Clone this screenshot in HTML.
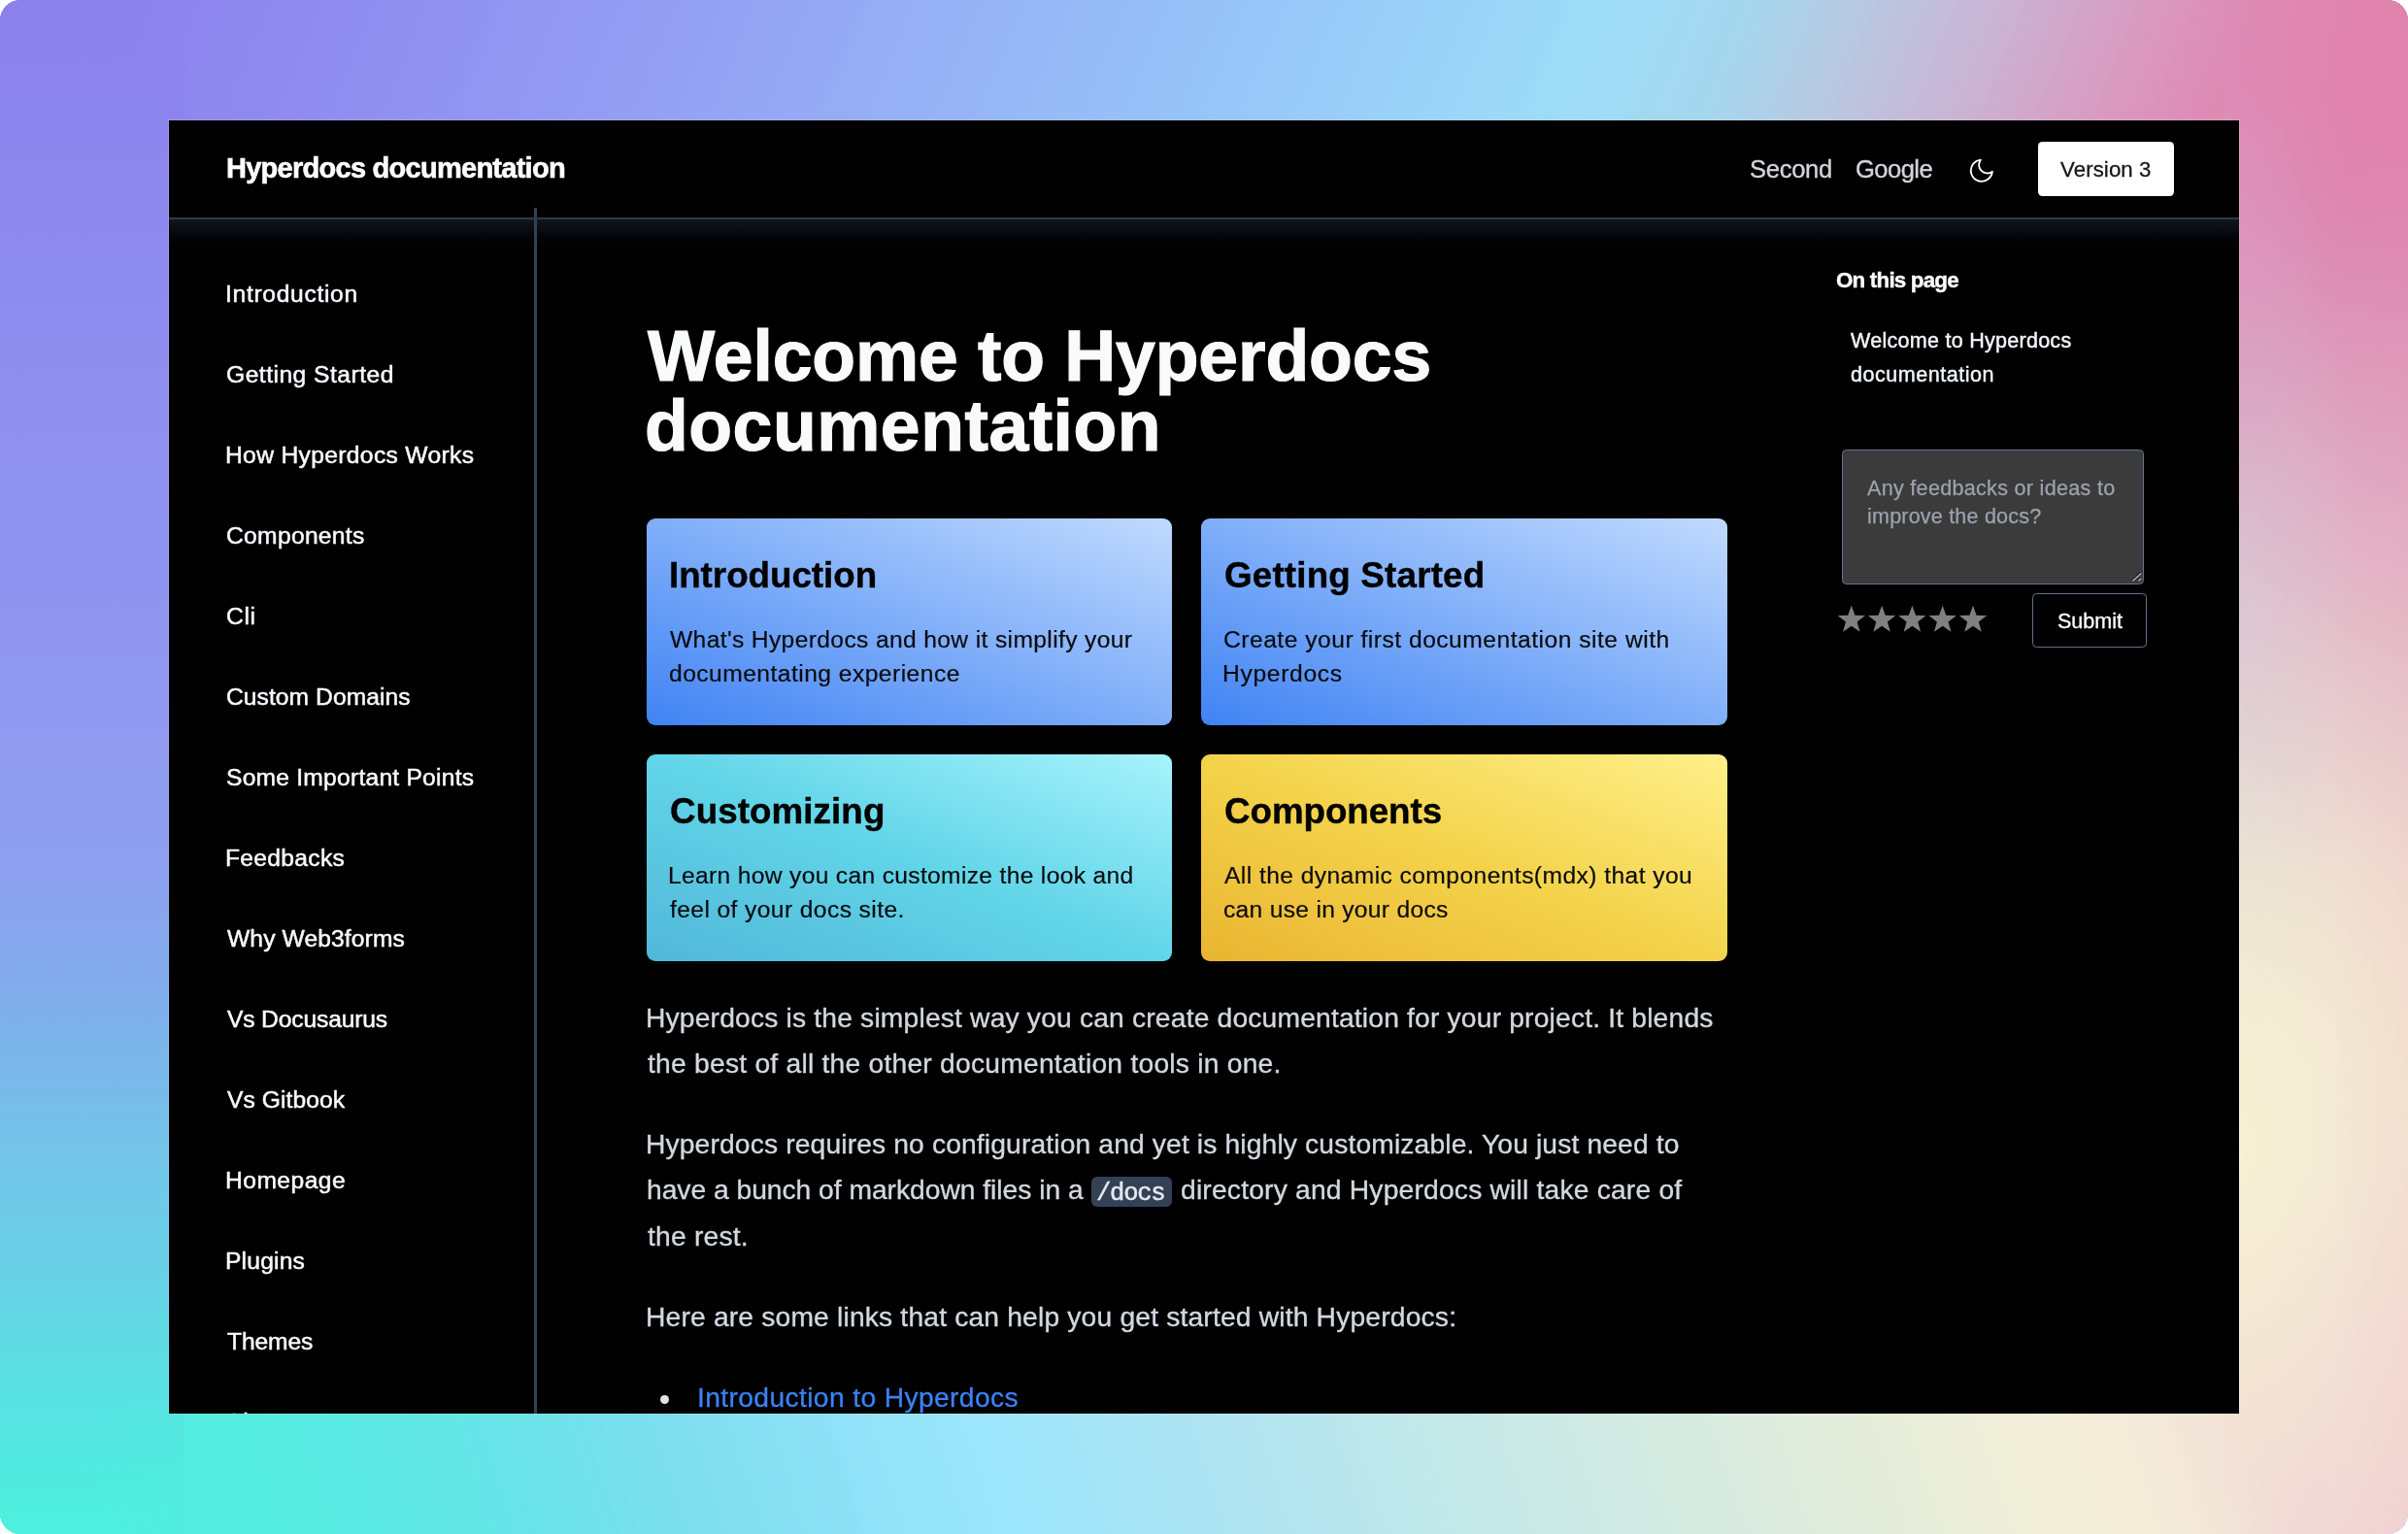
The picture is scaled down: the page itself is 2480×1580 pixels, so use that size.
<!DOCTYPE html>
<html lang="en">
<head>
<meta charset="utf-8">
<title>Hyperdocs documentation</title>
<style>
html,body{margin:0;padding:0;background:#fff;}
body{width:2480px;height:1580px;position:relative;overflow:hidden;font-family:"Liberation Sans",sans-serif;}
#bg{position:absolute;left:0;top:0;width:2480px;height:1580px;border-radius:21px;overflow:hidden;background:#9cc6f4;}
#bg div{position:absolute;}
#bgT{left:0;top:0;width:2480px;height:800px;background:linear-gradient(112deg,#8b7fec 0.89%,#8f8aef 11.60%,#939bf2 23.01%,#96aff5 34.07%,#96c3f8 45.13%,#9bd4f8 54.40%,#9ddcf7 58.68%,#a5d7ee 64.39%,#b9c8e1 68.67%,#cbb2d2 74.02%,#da98be 79.37%,#e084af 84.73%,#e07daa 89.36%);}
#bgB{left:0;top:780px;width:2480px;height:800px;background:linear-gradient(72deg,#4eeede 0.74%,#55ebe1 11.68%,#64e4e6 18.98%,#7ddeee 26.28%,#91e2f8 33.58%,#9be6fc 37.96%,#ade4f3 45.99%,#c3e8e8 55.48%,#d7ebe1 64.61%,#e6edda 71.90%,#f4eed8 79.20%,#f3e4d9 84.68%,#f0d8d6 91.25%);}
#bgL{left:0;top:0;width:190px;height:1580px;background:linear-gradient(180deg,#8b80ec 0.00%,#8c87ed 12.66%,#8f8fef 25.32%,#9094f0 37.97%,#9097f0 44.30%,#8e9fef 55.70%,#82aaec 63.29%,#7ab8ea 69.62%,#72c6e8 75.95%,#68cfe6 82.28%,#5cdee3 88.61%,#52e9e0 94.94%,#4cf0de 100.00%);-webkit-mask-image:linear-gradient(180deg,transparent 20px,#000 150px,#000 1440px,transparent 1560px),linear-gradient(90deg,#000 100px,transparent 190px);mask-image:linear-gradient(180deg,transparent 20px,#000 150px,#000 1440px,transparent 1560px),linear-gradient(90deg,#000 100px,transparent 190px);}
#bgR{left:2290px;top:0;width:190px;height:1580px;background:radial-gradient(ellipse 130px 430px at 0px 110px,rgba(221,152,192,.55),rgba(221,152,192,0)),radial-gradient(ellipse 120px 520px at 15px 600px,rgba(195,228,235,.26),rgba(195,228,235,0)),radial-gradient(ellipse 130px 420px at 15px 1190px,rgba(250,252,205,.4),rgba(250,252,205,0)),linear-gradient(90deg,rgba(236,130,165,0) 60%,rgba(236,130,165,.08) 100%),linear-gradient(184deg,#df84ae 0.38%,#df82ad 6.66%,#de86b0 12.93%,#dd90b6 19.21%,#de9ebc 25.49%,#e0abc2 31.76%,#e3b8c7 38.04%,#e6c6cc 44.32%,#ead3cf 50.59%,#efdfd2 56.87%,#f2e5d3 63.15%,#f3e8d5 69.42%,#f3e8d6 75.70%,#f3e4d6 81.97%,#f2e0d6 88.25%,#f1dcd5 94.53%,#f0d8d5 99.55%);-webkit-mask-image:linear-gradient(180deg,transparent 20px,#000 150px,#000 1440px,transparent 1560px),linear-gradient(270deg,#000 100px,transparent 190px);mask-image:linear-gradient(180deg,transparent 20px,#000 150px,#000 1440px,transparent 1560px),linear-gradient(270deg,#000 100px,transparent 190px);}
#win{position:absolute;left:174px;top:124px;width:2132px;height:1332px;background:#000;overflow:hidden;box-shadow:0 0 0 1px rgba(255,255,255,.15);}
#win>*{position:absolute;}
.t{position:absolute;white-space:nowrap;line-height:1;margin:0;padding:0;will-change:transform;text-decoration:none;font-weight:400;font-style:normal;}
.g{display:contents;}
a{text-decoration:none;color:inherit;}
#hshadow{left:0;top:102px;width:2132px;height:27px;background:linear-gradient(180deg,#11151e 0%,#0b0e14 30%,#04050a 65%,#000 100%);}
#hline{left:0;top:100px;width:2132px;height:2px;background:#2e3a4d;}
#vline{left:376px;top:90px;width:3px;height:1250px;background:#334155;}
.card{border-radius:9px;width:541px;height:213px;}
#verbtn{left:1925px;top:22px;width:140px;height:56.1px;border-radius:4.5px;background:#fff;}
#ta{left:1723.25px;top:338.9px;width:310.95px;height:139px;border-radius:4.5px;background:#3b3b3b;border:1.5px solid #64748b;box-sizing:border-box;}
#submit{left:1918.9px;top:486.9px;width:118.3px;height:56.3px;border-radius:4.5px;border:1.5px solid #64748b;box-sizing:border-box;background:#000;}
#code{left:950.25px;top:1088px;width:82.75px;height:30.8px;border-radius:6px;background:#334155;}
#bullet{left:505.8px;top:1312.5px;width:9px;height:9px;border-radius:50%;background:#e0e4ea;}
</style>
</head>
<body>
<div id="bg"><div id="bgT"></div><div id="bgB"></div><div id="bgL"></div><div id="bgR"></div></div>
<div id="win">
  <div id="hshadow"></div>
  <div id="vline"></div>
  <div id="hline"></div>
  <div id="verbtn"></div>
  <svg id="moon" style="left:1852.3px;top:37px" width="29.6" height="29.6" viewBox="0 0 24 24" fill="none" stroke="#fff" stroke-width="1.5" stroke-linecap="round" stroke-linejoin="round"><path d="M21 12.79A9 9 0 1 1 11.21 3 7 7 0 0 0 21 12.79z"/></svg>
  <div class="card" style="left:492px;top:410px;background:linear-gradient(to top right,#4083f4,#c0dafe);"></div>
  <div class="card" style="left:1063px;top:410px;width:542px;background:linear-gradient(to top right,#4083f4,#c0dafe);"></div>
  <div class="card" style="left:492px;top:653px;background:linear-gradient(to top right,#52b7d9,#61d5e8 50%,#a7f3fc);"></div>
  <div class="card" style="left:1063px;top:653px;width:542px;background:linear-gradient(to top right,#eab531,#f4d34b 50%,#fef08a);"></div>
  <div id="code"></div>
  <div id="bullet"></div>
  <div id="ta"></div>
  <div id="submit"></div>
  <svg id="grip" style="left:2019px;top:463px" width="14" height="14" viewBox="0 0 14 14" fill="none" stroke-linecap="butt"><path d="M2.5 10.6 L11.4 2.8 M8.6 10.6 L11.4 8.2" stroke="#141414" stroke-width="1.1"/><path d="M3.3 11.4 L12.2 3.6 M9.4 11.4 L12.2 9" stroke="#cfcfcf" stroke-width="1.2"/></svg>
  <svg id="stars" style="left:1699.5px;top:480px" width="200" height="70" viewBox="0 0 200 70" fill="#808080"><polygon points="32.80,19.80 36.39,29.76 46.97,30.10 38.60,36.59 41.56,46.75 32.80,40.80 24.04,46.75 27.00,36.59 18.63,30.10 29.21,29.76"/><polygon points="64.10,19.80 67.69,29.76 78.27,30.10 69.90,36.59 72.86,46.75 64.10,40.80 55.34,46.75 58.30,36.59 49.93,30.10 60.51,29.76"/><polygon points="95.40,19.80 98.99,29.76 109.57,30.10 101.20,36.59 104.16,46.75 95.40,40.80 86.64,46.75 89.60,36.59 81.23,30.10 91.81,29.76"/><polygon points="126.70,19.80 130.29,29.76 140.87,30.10 132.50,36.59 135.46,46.75 126.70,40.80 117.94,46.75 120.90,36.59 112.53,30.10 123.11,29.76"/><polygon points="158.00,19.80 161.59,29.76 172.17,30.10 163.80,36.59 166.76,46.75 158.00,40.80 149.24,46.75 152.20,36.59 143.83,30.10 154.41,29.76"/></svg>
<header class="g">
<a class="t" href="#" style="left:59.00px;top:34.60px;font-size:29.05px;letter-spacing:-0.761px;color:#fff;font-weight:700;-webkit-text-stroke:0.6px #fff;">Hyperdocs documentation</a>
<nav class="g"><a class="t" href="#" style="left:1628.00px;top:38.00px;font-size:25.58px;letter-spacing:-0.305px;color:#d1d5db;-webkit-text-stroke:0.35px #d1d5db;">Second</a><a class="t" href="#" style="left:1736.60px;top:38.00px;font-size:25.58px;letter-spacing:-0.571px;color:#d1d5db;-webkit-text-stroke:0.35px #d1d5db;">Google</a></nav>
<span class="t" style="left:1948.20px;top:39.60px;font-size:22.18px;letter-spacing:0.118px;color:#171717;-webkit-text-stroke:0.3px #171717;">Version 3</span>
</header>
<nav class="g" aria-label="Docs"><ul class="g">
<li class="g"><a class="t" href="#" style="left:58.30px;top:167.40px;font-size:24.64px;letter-spacing:0.683px;color:#f8fafc;-webkit-text-stroke:0.5px #f8fafc;">Introduction</a></li>
<li class="g"><a class="t" href="#" style="left:59.30px;top:250.36px;font-size:24.64px;letter-spacing:0.483px;color:#f8fafc;-webkit-text-stroke:0.5px #f8fafc;">Getting Started</a></li>
<li class="g"><a class="t" href="#" style="left:58.30px;top:333.32px;font-size:24.64px;letter-spacing:0.336px;color:#f8fafc;-webkit-text-stroke:0.5px #f8fafc;">How Hyperdocs Works</a></li>
<li class="g"><a class="t" href="#" style="left:59.30px;top:416.28px;font-size:24.64px;letter-spacing:0.299px;color:#f8fafc;-webkit-text-stroke:0.5px #f8fafc;">Components</a></li>
<li class="g"><a class="t" href="#" style="left:59.30px;top:499.24px;font-size:24.64px;letter-spacing:0.623px;color:#f8fafc;-webkit-text-stroke:0.5px #f8fafc;">Cli</a></li>
<li class="g"><a class="t" href="#" style="left:59.30px;top:582.20px;font-size:24.64px;letter-spacing:0.059px;color:#f8fafc;-webkit-text-stroke:0.5px #f8fafc;">Custom Domains</a></li>
<li class="g"><a class="t" href="#" style="left:59.30px;top:665.16px;font-size:24.64px;letter-spacing:0.227px;color:#f8fafc;-webkit-text-stroke:0.5px #f8fafc;">Some Important Points</a></li>
<li class="g"><a class="t" href="#" style="left:58.30px;top:748.12px;font-size:24.64px;letter-spacing:0.307px;color:#f8fafc;-webkit-text-stroke:0.5px #f8fafc;">Feedbacks</a></li>
<li class="g"><a class="t" href="#" style="left:60.30px;top:831.08px;font-size:24.64px;letter-spacing:0.106px;color:#f8fafc;-webkit-text-stroke:0.5px #f8fafc;">Why Web3forms</a></li>
<li class="g"><a class="t" href="#" style="left:60.30px;top:914.04px;font-size:24.64px;letter-spacing:-0.155px;color:#f8fafc;-webkit-text-stroke:0.5px #f8fafc;">Vs Docusaurus</a></li>
<li class="g"><a class="t" href="#" style="left:60.30px;top:997.00px;font-size:24.64px;letter-spacing:0.074px;color:#f8fafc;-webkit-text-stroke:0.5px #f8fafc;">Vs Gitbook</a></li>
<li class="g"><a class="t" href="#" style="left:58.30px;top:1079.96px;font-size:24.64px;letter-spacing:0.461px;color:#f8fafc;-webkit-text-stroke:0.5px #f8fafc;">Homepage</a></li>
<li class="g"><a class="t" href="#" style="left:58.30px;top:1162.92px;font-size:24.64px;letter-spacing:0.191px;color:#f8fafc;-webkit-text-stroke:0.5px #f8fafc;">Plugins</a></li>
<li class="g"><a class="t" href="#" style="left:60.30px;top:1245.88px;font-size:24.64px;letter-spacing:-0.108px;color:#f8fafc;-webkit-text-stroke:0.5px #f8fafc;">Themes</a></li>
<li class="g"><a class="t" href="#" style="left:59.30px;top:1328.84px;font-size:24.64px;letter-spacing:0.740px;color:#f8fafc;-webkit-text-stroke:0.5px #f8fafc;">Showcase</a></li>
</ul></nav>
<main class="g">
<h1 class="g"><span class="t" style="left:493.20px;top:207.00px;font-size:73.30px;letter-spacing:-0.107px;color:#f9fafb;font-weight:700;-webkit-text-stroke:1.2px #f9fafb;">Welcome to Hyperdocs</span> <span class="t" style="left:490.20px;top:278.60px;font-size:73.30px;letter-spacing:0.524px;color:#f9fafb;font-weight:700;-webkit-text-stroke:1.2px #f9fafb;">documentation</span></h1>
<a class="g" href="#"><h2 class="g"><span class="t" style="left:515.30px;top:450.90px;font-size:36.78px;letter-spacing:-0.024px;color:#000;font-weight:700;-webkit-text-stroke:0.4px #000;">Introduction</span></h2><p class="g"><span class="t" style="left:515.50px;top:522.70px;font-size:24.64px;letter-spacing:0.355px;color:#0b0b0f;-webkit-text-stroke:0.2px #0b0b0f;">What's Hyperdocs and how it simplify your</span> <span class="t" style="left:514.50px;top:558.00px;font-size:24.64px;letter-spacing:0.458px;color:#0b0b0f;-webkit-text-stroke:0.2px #0b0b0f;">documentating experience</span></p></a>
<a class="g" href="#"><h2 class="g"><span class="t" style="left:1087.30px;top:450.90px;font-size:36.78px;letter-spacing:0.187px;color:#000;font-weight:700;-webkit-text-stroke:0.4px #000;">Getting Started</span></h2><p class="g"><span class="t" style="left:1085.50px;top:522.70px;font-size:24.64px;letter-spacing:0.496px;color:#0b0b0f;-webkit-text-stroke:0.2px #0b0b0f;">Create your first documentation site with</span> <span class="t" style="left:1084.50px;top:558.00px;font-size:24.64px;letter-spacing:0.676px;color:#0b0b0f;-webkit-text-stroke:0.2px #0b0b0f;">Hyperdocs</span></p></a>
<a class="g" href="#"><h2 class="g"><span class="t" style="left:516.30px;top:693.90px;font-size:36.78px;letter-spacing:0.078px;color:#000;font-weight:700;-webkit-text-stroke:0.4px #000;">Customizing</span></h2><p class="g"><span class="t" style="left:513.50px;top:765.70px;font-size:24.64px;letter-spacing:0.318px;color:#0b0b0f;-webkit-text-stroke:0.2px #0b0b0f;">Learn how you can customize the look and</span> <span class="t" style="left:515.50px;top:801.00px;font-size:24.64px;letter-spacing:0.393px;color:#0b0b0f;-webkit-text-stroke:0.2px #0b0b0f;">feel of your docs site.</span></p></a>
<a class="g" href="#"><h2 class="g"><span class="t" style="left:1087.30px;top:693.90px;font-size:36.78px;letter-spacing:-0.058px;color:#000;font-weight:700;-webkit-text-stroke:0.4px #000;">Components</span></h2><p class="g"><span class="t" style="left:1086.50px;top:765.70px;font-size:24.64px;letter-spacing:0.419px;color:#0b0b0f;-webkit-text-stroke:0.2px #0b0b0f;">All the dynamic components(mdx) that you</span> <span class="t" style="left:1085.50px;top:801.00px;font-size:24.64px;letter-spacing:0.287px;color:#0b0b0f;-webkit-text-stroke:0.2px #0b0b0f;">can use in your docs</span></p></a>
<p class="g"><span class="t" style="left:491.30px;top:910.00px;font-size:28.25px;letter-spacing:0.169px;color:#d3d8e0;-webkit-text-stroke:0.35px #d3d8e0;">Hyperdocs is the simplest way you can create documentation for your project. It blends</span> <span class="t" style="left:493.30px;top:957.30px;font-size:28.25px;letter-spacing:0.224px;color:#d3d8e0;-webkit-text-stroke:0.35px #d3d8e0;">the best of all the other documentation tools in one.</span></p>
<p class="g"><span class="t" style="left:491.30px;top:1040.00px;font-size:28.25px;letter-spacing:0.129px;color:#d3d8e0;-webkit-text-stroke:0.35px #d3d8e0;">Hyperdocs requires no configuration and yet is highly customizable. You just need to</span> <span class="t" style="left:492.30px;top:1087.40px;font-size:28.25px;letter-spacing:-0.031px;color:#d3d8e0;-webkit-text-stroke:0.35px #d3d8e0;">have a bunch of markdown files in a</span> <code class="g"><span class="t" style="left:955.40px;top:1093.00px;font-size:25.50px;letter-spacing:-1.227px;color:#e5e9f0;-webkit-text-stroke:0.5px #e5e9f0;font-family:'Liberation Mono',monospace;">/docs</span></code> <span class="t" style="left:1042.00px;top:1087.40px;font-size:28.25px;letter-spacing:0.185px;color:#d3d8e0;-webkit-text-stroke:0.35px #d3d8e0;">directory and Hyperdocs will take care of</span> <span class="t" style="left:493.30px;top:1134.70px;font-size:28.25px;letter-spacing:0.192px;color:#d3d8e0;-webkit-text-stroke:0.35px #d3d8e0;">the rest.</span></p>
<p class="g"><span class="t" style="left:491.30px;top:1217.80px;font-size:28.25px;letter-spacing:0.166px;color:#d3d8e0;-webkit-text-stroke:0.35px #d3d8e0;">Here are some links that can help you get started with Hyperdocs:</span></p>
<ul class="g"><li class="g"><a class="t" href="#" style="left:543.50px;top:1301.20px;font-size:28.25px;letter-spacing:0.362px;color:#3b82f6;-webkit-text-stroke:0.3px #3b82f6;">Introduction to Hyperdocs</a></li></ul>
</main>
<aside class="g">
<h4 class="g"><span class="t" style="left:1717.30px;top:153.50px;font-size:22.39px;letter-spacing:-0.806px;color:#fff;font-weight:700;-webkit-text-stroke:0.4px #fff;">On this page</span></h4>
<a class="g" href="#"><span class="t" style="left:1732.00px;top:215.60px;font-size:21.56px;letter-spacing:0.254px;color:#f1f5f9;-webkit-text-stroke:0.45px #f1f5f9;">Welcome to Hyperdocs</span> <span class="t" style="left:1732.00px;top:251.00px;font-size:21.56px;letter-spacing:0.503px;color:#f1f5f9;-webkit-text-stroke:0.45px #f1f5f9;">documentation</span></a>
<label class="g"><span class="t" style="left:1749.00px;top:367.60px;font-size:21.56px;letter-spacing:0.302px;color:#9ca3af;-webkit-text-stroke:0.25px #9ca3af;">Any feedbacks or ideas to</span> <span class="t" style="left:1749.20px;top:397.20px;font-size:21.56px;letter-spacing:0.195px;color:#9ca3af;-webkit-text-stroke:0.25px #9ca3af;">improve the docs?</span></label>
<span class="t" style="left:1945.00px;top:504.60px;font-size:21.56px;letter-spacing:-0.015px;color:#fff;-webkit-text-stroke:0.3px #fff;">Submit</span>
</aside>
</div>
</body>
</html>
